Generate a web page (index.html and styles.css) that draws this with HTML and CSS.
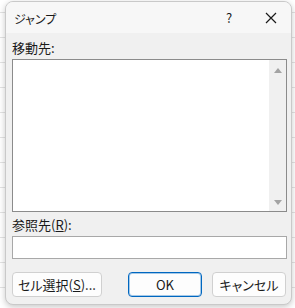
FILE: index.html
```html
<!DOCTYPE html>
<html lang="ja">
  <head>
    <meta charset="UTF-8" />
    <title>ジャンプ</title>
    <link rel="stylesheet" href="styles.css">
  </head>
  <body>
    <div class="dialog">
      <div class="title-bar">
        <span class="title">ジャンプ</span>
        <span class="help">?</span>
        <span class="close">
          <svg width="12" height="12" viewBox="0 0 12 12">
            <path d="M1 1 L11 11 M11 1 L1 11" stroke="#1a1a1a" stroke-width="1.2" fill="none" />
          </svg>
        </span>
      </div>
      <div class="dialog-body">
        <div class="label">移動先:</div>
        <div class="listbox">
          <div class="list-items"></div>
          <div class="scrollbar">
            <span class="arrow up"></span>
            <span class="arrow down"></span>
          </div>
        </div>
        <div class="label ref-label">参照先(<u>R</u>):</div>
        <div class="textbox"></div>
        <div class="buttons">
          <button class="btn cell-btn">セル選択(<u>S</u>)...</button>
          <button class="btn ok-btn">OK</button>
          <button class="btn cancel-btn">キャンセル</button>
        </div>
      </div>
    </div>
  </body>
</html>
```

FILE: styles.css
```css
body {
  margin: 0;
  width: 295px;
  height: 308px;
  overflow: hidden;
  background-color: #ffffff;
  background-image:
    linear-gradient(#e3e3e3 1px, transparent 1px);
  background-size: 100% 25px;
  background-position: 0 12px;
  font-family: "Noto Sans CJK JP", "Noto Sans", sans-serif;
  font-feature-settings: "palt";
  color: #1a1a1a;
}

.dialog {
  margin: 1px 0 0 5px;
  width: 287px;
  height: 304px;
  box-sizing: border-box;
  border: 1px solid #c9c9c9;
  border-radius: 8px;
  background: #f0f0f0;
  box-shadow: 0 2px 6px rgba(0, 0, 0, 0.22);
  overflow: hidden;
}

.title-bar {
  display: flex;
  align-items: center;
  height: 31px;
  background: #f7f7f7;
  padding-left: 8px;
}

.title {
  flex: 1;
  font-size: 12px;
  padding-top: 1px;
}

.help {
  width: 20px;
  font-size: 13px;
  text-align: center;
  margin-right: 22px;
}

.close {
  width: 20px;
  display: flex;
  justify-content: center;
  margin-right: 10px;
}

.dialog-body {
  padding: 5px 4px 0 6px;
}

.label {
  font-size: 13px;
  line-height: 20px;
  height: 21px;
}

.listbox {
  display: flex;
  height: 153px;
  box-sizing: border-box;
  border: 1px solid #8b8b8b;
  background: #ffffff;
}

.list-items {
  flex: 1;
}

.scrollbar {
  width: 17px;
  background: #f0f0f0;
  display: flex;
  flex-direction: column;
  justify-content: space-between;
  align-items: center;
  padding: 8px 0 6px;
}

.arrow {
  width: 0;
  height: 0;
  border-left: 4px solid transparent;
  border-right: 4px solid transparent;
}

.arrow.up {
  border-bottom: 5px solid #a3a3a3;
}

.arrow.down {
  border-top: 5px solid #a3a3a3;
}

.ref-label {
  margin-top: 3px;
  height: 21px;
}

.textbox {
  height: 23px;
  box-sizing: border-box;
  border: 1px solid #a8a8a8;
  background: #ffffff;
}

.buttons {
  display: flex;
  margin-top: 13px;
  gap: 10px;
}

.btn {
  height: 25px;
  box-sizing: border-box;
  border: 1px solid #d0d0d0;
  border-radius: 4px;
  background: #fdfdfd;
  font-family: inherit;
  font-feature-settings: "palt";
  font-size: 13px;
  color: #1a1a1a;
  padding: 0;
}

.cell-btn {
  width: 90px;
  margin-right: 16px;
}

.ok-btn {
  width: 74px;
  border-color: #0067c0;
  box-shadow: inset 0 0 0 1px rgba(0, 103, 192, 0.35);
}

.cancel-btn {
  width: 74px;
}
```
